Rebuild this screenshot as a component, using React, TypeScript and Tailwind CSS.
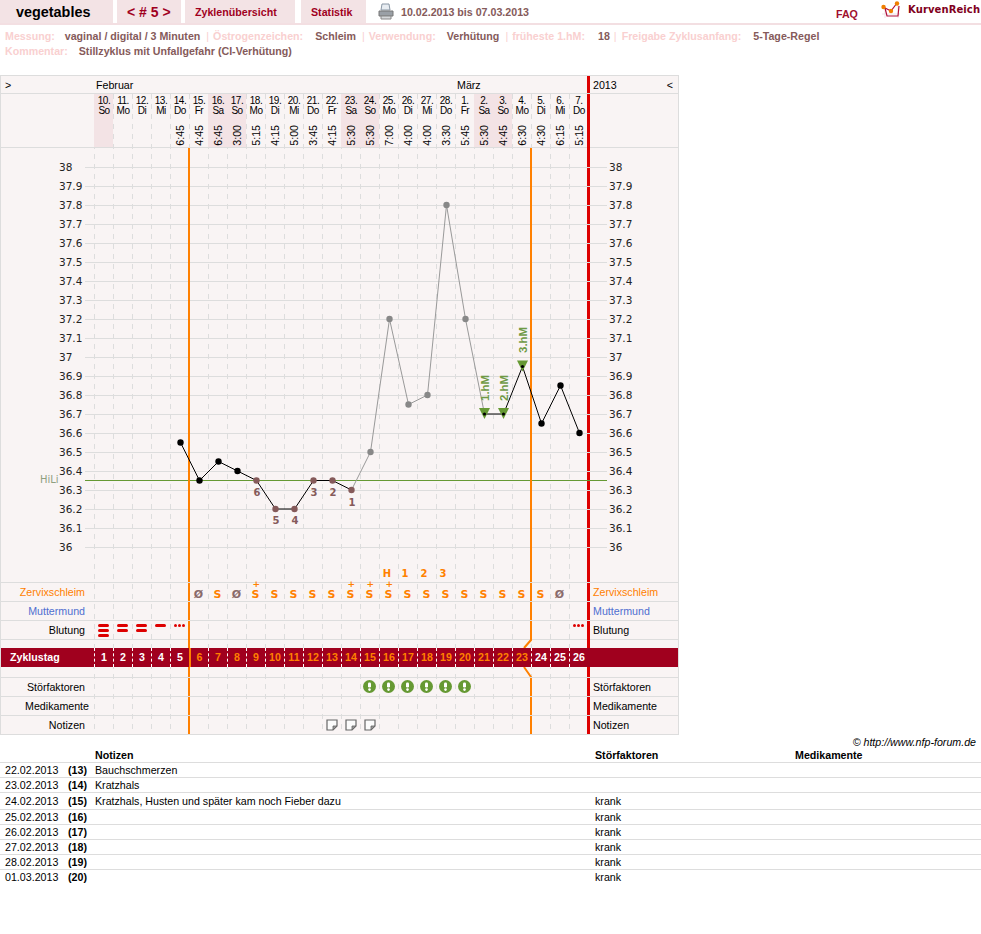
const DAYS = [
  ["10.", "So"], ["11.", "Mo"], ["12.", "Di"], ["13.", "Mi"], ["14.", "Do"], ["15.", "Fr"], ["16.", "Sa"], ["17.", "So"], ["18.", "Mo"],
  ["19.", "Di"], ["20.", "Mi"], ["21.", "Do"], ["22.", "Fr"], ["23.", "Sa"], ["24.", "So"], ["25.", "Mo"], ["26.", "Di"], ["27.", "Mi"],
  ["28.", "Do"], ["1.", "Fr"], ["2.", "Sa"], ["3.", "So"], ["4.", "Mo"], ["5.", "Di"], ["6.", "Mi"], ["7.", "Do"],
];
const TIMES = ["", "", "", "", "6:45", "4:45", "6:45", "3:00", "5:15", "4:15", "5:00", "3:45", "4:15", "5:30", "5:30", "7:00", "4:00", "4:00", "3:30", "5:45", "5:30", "4:45", "6:30", "4:30", "6:15", "5:15"];
const WEEKEND = [0, 6, 7, 13, 14, 20, 21];
const TEMPS = [36.55, 36.35, 36.45, 36.4, 36.35, 36.2, 36.2, 36.35, 36.35, 36.3, 36.5, 37.2, 36.75, 36.8, 37.8, 37.2, 36.7, 36.7, 36.95, 36.65, 36.85, 36.6];
const GREY_SEGMENTS = [9, 10, 11, 12, 13, 14, 15];
const LOW = [4, 5, 6, 7, 8, 9];
const MUCUS: Record<number, string> = { 5: "Ø", 6: "S", 7: "Ø", 8: "S+", 9: "S", 10: "S", 11: "S", 12: "S", 13: "S+", 14: "S+", 15: "S+", 16: "S", 17: "S", 18: "S", 19: "S", 20: "S", 21: "S", 22: "S", 23: "S", 24: "Ø" };
const SCALE = ["38", "37.9", "37.8", "37.7", "37.6", "37.5", "37.4", "37.3", "37.2", "37.1", "37", "36.9", "36.8", "36.7", "36.6", "36.5", "36.4", "36.3", "36.2", "36.1", "36"];
const NOTES = [
  ["22.02.2013", "(13)", "Bauchschmerzen", ""],
  ["23.02.2013", "(14)", "Kratzhals", ""],
  ["24.02.2013", "(15)", "Kratzhals, Husten und später kam noch Fieber dazu", "krank"],
  ["25.02.2013", "(16)", "", "krank"],
  ["26.02.2013", "(17)", "", "krank"],
  ["27.02.2013", "(18)", "", "krank"],
  ["28.02.2013", "(19)", "", "krank"],
  ["01.03.2013", "(20)", "", "krank"],
];
const CELLS = Array.from({ length: 26 }, (_, i) => i);

const px = (i: number) => 180.5 + 19 * i;
const py = (t: number) => 167 + (38 - t) * 190;

function Row({ label, labelClass = "", right, rightClass = "", children }: { label: string; labelClass?: string; right?: string; rightClass?: string; children?: (i: number) => React.ReactNode }) {
  return (
    <div className="relative flex h-[19px] border-t border-[#dddddd] leading-[18px]">
      <div className={`w-[93px] shrink-0 text-right whitespace-nowrap ${labelClass}`}>{label}</div>
      {CELLS.map((i) => (
        <div key={i} className="flex w-[19px] shrink-0 justify-center">
          {children?.(i)}
        </div>
      ))}
      <div className={`pl-[5px] ${rightClass}`}>{right ?? label}</div>
    </div>
  );
}

function Blood({ i }: { i: number }) {
  const bars = i === 0 ? 3 : i === 1 || i === 2 ? 2 : i === 3 ? 1 : 0;
  if (bars > 0) {
    return (
      <div className="flex flex-col gap-[2px] pt-[3px]">
        {Array.from({ length: bars }, (_, b) => (
          <div key={b} className="h-[3px] w-[11px] rounded-full bg-[#dd0000]" />
        ))}
      </div>
    );
  }
  if (i === 4 || i === 25) {
    return (
      <div className="flex gap-[1px] pt-[3px]">
        <div className="h-[3px] w-[3px] rounded-full bg-[#dd0000]" />
        <div className="h-[3px] w-[3px] rounded-full bg-[#dd0000]" />
        <div className="h-[3px] w-[3px] rounded-full bg-[#dd0000]" />
      </div>
    );
  }
  return null;
}

function Mucus({ i }: { i: number }) {
  const value = MUCUS[i];
  if (!value) return null;
  const plus = value === "S+";
  return (
    <div className={`relative mt-[6px] h-[12px] font-['DejaVu_Sans',sans-serif] text-[11px] font-bold leading-[12px] ${value === "Ø" ? "text-[#8a6a6a]" : "text-[#ff8000]"}`}>
      {plus && <span className="absolute left-[1px] top-[-8px] text-[9px] leading-[7px]">+</span>}
      {plus ? "S" : value}
    </div>
  );
}

function Warning() {
  return (
    <svg width="13" height="13" viewBox="0 0 13 13" className="mt-[2px]">
      <circle cx="6.5" cy="6.5" r="6.5" fill="#669933" />
      <rect x="5" y="2.5" width="3" height="5" rx="1.2" fill="#ffffff" />
      <circle cx="6.5" cy="9.6" r="1.3" fill="#ffffff" />
    </svg>
  );
}

function Note() {
  return (
    <svg width="12" height="12" viewBox="0 0 12 12" className="mt-[3px]">
      <path d="M1 1H11V7L7 11H1Z" fill="#fbfbfb" stroke="#666666" strokeWidth="1.2" />
      <path d="M11 7H7V11Z" fill="#999999" stroke="#666666" strokeWidth="0.8" />
    </svg>
  );
}

function Chart() {
  return (
    <svg width="677" height="434" viewBox="1 148 677 434" className="relative block">
      {SCALE.map((label, k) => (
        <g key={label}>
          <line x1="85" x2="607" y1={167.5 + 19 * k} y2={167.5 + 19 * k} stroke="#dddddd" />
          <text x="59" y={171 + 19 * k} fontSize="10.5" fill="#222222" className="font-['DejaVu_Sans',sans-serif]">{label}</text>
          <text x="609" y={171 + 19 * k} fontSize="10.5" fill="#222222" className="font-['DejaVu_Sans',sans-serif]">{label}</text>
        </g>
      ))}
      <line x1="85" x2="607" y1="480.5" y2="480.5" stroke="#669933" />
      <text x="40" y="483" fontSize="10" fill="#8fa080" className="font-['DejaVu_Sans',sans-serif]">HiLi</text>
      <line x1="189" x2="189" y1="148" y2="582" stroke="#ff8000" strokeWidth="2" />
      <line x1="531" x2="531" y1="148" y2="582" stroke="#ff8000" strokeWidth="2" />
      {TEMPS.slice(1).map((t, i) => (
        <line
          key={i}
          x1={px(i)}
          y1={py(TEMPS[i])}
          x2={px(i + 1)}
          y2={py(t)}
          stroke={GREY_SEGMENTS.includes(i) ? "#999999" : "#000000"}
          strokeWidth="1"
        />
      ))}
      {[16, 17, 18].map((i) => (
        <polygon key={i} points={`${px(i) - 5.5},${py(TEMPS[i]) - 6} ${px(i) + 5.5},${py(TEMPS[i]) - 6} ${px(i)},${py(TEMPS[i]) + 5}`} fill="#669933" />
      ))}
      {TEMPS.map((t, i) => {
        const grey = i >= 10 && i <= 15;
        const marked = i >= 16 && i <= 18;
        const low = LOW.includes(i);
        return <circle key={i} cx={px(i)} cy={py(t)} r={marked ? 1.6 : 3.2} fill={low ? "#855a5a" : grey ? "#888888" : "#000000"} />;
      })}
      {[["6", 257, 496], ["5", 276, 524], ["4", 295, 524], ["3", 314, 496], ["2", 333, 496], ["1", 352, 506]].map(([n, x, y]) => (
        <text key={n} x={x} y={y} textAnchor="middle" fontSize="10" fontWeight="bold" fill="#855a5a" className="font-['DejaVu_Sans',sans-serif]">{n}</text>
      ))}
      {[["H", 387], ["1", 405], ["2", 424], ["3", 443]].map(([n, x]) => (
        <text key={n} x={x} y="577" textAnchor="middle" fontSize="10" fontWeight="bold" fill="#ff8000" className="font-['DejaVu_Sans',sans-serif]">{n}</text>
      ))}
      {[["1.hM", 488.5, 401], ["2.hM", 507.5, 401], ["3.hM", 526.5, 353]].map(([n, x, y]) => (
        <text key={n} transform={`translate(${x} ${y}) rotate(-90)`} fontSize="11.5" fontWeight="bold" fill="#6f9a45">{n}</text>
      ))}
    </svg>
  );
}

export default function App() {
  return (
    <div className="min-h-[934px] bg-white font-['Liberation_Sans',Arial,sans-serif] text-[10.67px] text-black">
      <div className="flex h-[25px] border-b-2 border-[#f3dfe2] whitespace-nowrap">
        <div className="w-[113px] shrink-0 bg-[#f3e3e5] pl-[16px] text-[14.4px] font-bold leading-[24px]">vegetables</div>
        <div className="ml-[4px] w-[64px] shrink-0 bg-[#f3e3e5] pl-[10px] text-[14px] font-bold leading-[24px] text-[#a0001e]">&lt; # 5 &gt;</div>
        <div className="ml-[4px] w-[110px] shrink-0 bg-[#f3e3e5] pl-[10px] font-bold leading-[24px] text-[#a0001e]">Zyklenübersicht</div>
        <div className="ml-[6px] w-[65px] shrink-0 bg-[#f3e3e5] pl-[10px] font-bold leading-[24px] text-[#a0001e]">Statistik</div>
        <svg width="16" height="17" viewBox="0 0 16 17" className="ml-[12px] mt-[3px] shrink-0">
          <path d="M4 1H11L12 7H3Z" fill="#e8edf2" stroke="#8a97a5" />
          <path d="M1 8H15V13H1Z" fill="#9aa0a6" stroke="#777777" />
          <path d="M3 13H13V16H3Z" fill="#d5d8da" stroke="#888888" />
        </svg>
        <div className="ml-[7px] w-[435px] shrink-0 font-bold leading-[24px] text-[#855a5a]">10.02.2013 bis 07.03.2013</div>
        <div className="mt-[3px] w-[45px] shrink-0 font-bold leading-[23px] text-[#a0102e]">FAQ</div>
        <svg width="20" height="18" viewBox="0 0 20 18" className="mt-[1px] shrink-0">
          <path d="M1 13H19M4 4V17M17 2V17" fill="none" stroke="#eee2e5" />
          <path d="M4 7L6 15H17L18 5" fill="none" stroke="#b0103a" strokeWidth="1.2" />
          <path d="M2 6L10 10L16 2" fill="none" stroke="#b0103a" strokeWidth="1.2" />
          <circle cx="2.5" cy="6" r="2.2" fill="#f08000" />
          <circle cx="10" cy="10" r="2.2" fill="#f08000" />
          <circle cx="16" cy="2.5" r="2.2" fill="#f08000" />
        </svg>
        <div className="ml-[7px] font-['DejaVu_Sans',sans-serif] text-[10px] font-bold leading-[20px] tracking-[0.1px] text-[#800020]">KurvenReich</div>
      </div>

      <div className="px-[5px] pt-[4px] pb-[16px] font-bold leading-[15px]">
        <div className="flex whitespace-nowrap">
          <span className="text-[#f9d0d0]">Messung:</span>
          <span className="ml-[10px] text-[#855a5a]">vaginal / digital / 3 Minuten</span>
          <span className="ml-[6px] font-normal text-[#f9d0d0]">|</span>
          <span className="ml-[4px] text-[#f9d0d0]">Östrogenzeichen:</span>
          <span className="ml-[12px] text-[#855a5a]">Schleim</span>
          <span className="ml-[6px] font-normal text-[#f9d0d0]">|</span>
          <span className="ml-[4px] text-[#f9d0d0]">Verwendung:</span>
          <span className="ml-[11px] text-[#855a5a]">Verhütung</span>
          <span className="ml-[6px] font-normal text-[#f9d0d0]">|</span>
          <span className="ml-[4px] text-[#f9d0d0]">früheste 1.hM:</span>
          <span className="ml-[13px] text-[#855a5a]">18</span>
          <span className="ml-[4px] font-normal text-[#f9d0d0]">|</span>
          <span className="ml-[5px] text-[#f9d0d0]">Freigabe Zyklusanfang:</span>
          <span className="ml-[12px] text-[#855a5a]">5-Tage-Regel</span>
        </div>
        <div className="flex whitespace-nowrap">
          <span className="text-[#f9d0d0]">Kommentar:</span>
          <span className="ml-[11px] text-[#855a5a]">Stillzyklus mit Unfallgefahr (CI-Verhütung)</span>
        </div>
      </div>

      <div className="relative w-[679px] border border-[#dddddd] bg-[#f9f4f4]">
        {/* day separators and the two cycle lines sit behind the rows */}
        <svg width="677" height="659" viewBox="1 76 677 659" className="absolute left-0 top-0">
          {CELLS.map((i) => (
            <line key={i} x1={94.5 + 19 * i} x2={94.5 + 19 * i} y1="94" y2="734" stroke="#dddddd" strokeDasharray="5 5" />
          ))}
          <line x1="189" x2="189" y1="148" y2="734" stroke="#ff8000" strokeWidth="2" />
          <path d="M531 148V640L524 648M524 667L531 677V734" fill="none" stroke="#ff8000" strokeWidth="2" />
          <line x1="588.5" x2="588.5" y1="76" y2="734" stroke="#dd0000" strokeWidth="3" />
        </svg>

        <div className="relative flex h-[18px] border-b border-[#dddddd] leading-[18px]">
          <div className="w-[93px] pl-[4px]">&gt;</div>
          <div className="w-[361px] pl-[2px]">Februar</div>
          <div className="w-[133px] pl-[2px]">März</div>
          <div className="pl-[5px]">2013</div>
          <div className="ml-auto pr-[5px]">&lt;</div>
        </div>

        <div className="flex h-[54px] border-b border-[#dddddd]">
          <div className="w-[93px] shrink-0" />
          {CELLS.map((i) => (
            <div
              key={i}
              className={`relative flex w-[19px] shrink-0 flex-col items-center justify-between pl-px pt-[2px] pb-[1px] text-[10px] leading-[10px] tracking-[-0.5px] ${WEEKEND.includes(i) ? "bg-[#f3e3e5]" : ""}`}
            >
              <div className="text-center">
                {DAYS[i][0]}
                <br />
                {DAYS[i][1]}
              </div>
              {TIMES[i] && <div className="rotate-180 text-[10.67px] leading-[11px] tracking-normal [writing-mode:vertical-rl]">{TIMES[i]}</div>}
            </div>
          ))}
        </div>

        <Chart />

        <Row label="Zervixschleim" labelClass="pr-[9px] text-[#ff8000]" rightClass="text-[#ff8000]">{(i) => <Mucus i={i} />}</Row>
        <Row label="Muttermund" labelClass="pr-[9px] text-[#4f6fd0]" rightClass="text-[#4f6fd0]" />
        <Row label="Blutung" labelClass="pr-[9px]">{(i) => <Blood i={i} />}</Row>
        <div className="h-[9px] border-t border-[#dddddd]" />

        <div className="relative flex h-[19px] bg-[#a0001e] font-bold leading-[19px] text-white">
          <div className="w-[93px] shrink-0 pl-[9px]">Zyklustag</div>
          {CELLS.map((i) => (
            <div
              key={i}
              className={`w-[19px] shrink-0 border-l border-dashed text-center ${i === 5 ? "border-l-2 border-solid border-[#ff8000]" : "border-white"} ${i >= 5 && i <= 22 ? "text-[#ff8000]" : ""}`}
            >
              {i + 1}
            </div>
          ))}
        </div>
        <div className="h-[10px]" />

        <Row label="Störfaktoren" labelClass="pr-[9px]">{(i) => (i >= 14 && i <= 19 ? <Warning /> : null)}</Row>
        <Row label="Medikamente" labelClass="pr-[5px]" />
        <Row label="Notizen" labelClass="pr-[9px]">{(i) => (i >= 12 && i <= 14 ? <Note /> : null)}</Row>
      </div>

      <div className="h-[13px] pr-[5px] text-right italic leading-[14px]">© http://www.nfp-forum.de</div>
      <div className="flex h-[15px] border-b border-[#dddddd] font-bold leading-[14px]">
        <div className="w-[95px] shrink-0" />
        <div className="w-[500px] shrink-0">Notizen</div>
        <div className="w-[200px] shrink-0">Störfaktoren</div>
        <div>Medikamente</div>
      </div>
      {NOTES.map((note, i) => (
        <div key={note[0]} className={`flex leading-[14px] ${i === 2 ? "h-[17px] pt-px" : "h-[15px]"} ${i < NOTES.length - 1 ? "border-b border-[#dddddd]" : ""}`}>
          <div className="w-[68px] shrink-0 pl-[5px]">{note[0]}</div>
          <div className="w-[27px] shrink-0 font-bold">{note[1]}</div>
          <div className="w-[500px] shrink-0">{note[2]}</div>
          <div>{note[3]}</div>
        </div>
      ))}
    </div>
  );
}
